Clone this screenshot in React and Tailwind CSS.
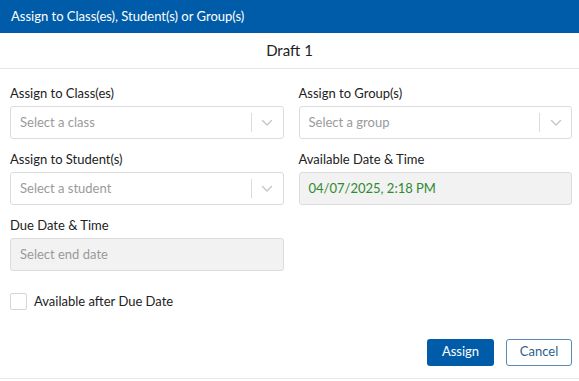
import React from "react";

function Chevron() {
  return (
    <svg width="12" height="8" viewBox="0 0 12 8" fill="none">
      <path d="M1.5 1.5 L6 6 L10.5 1.5" stroke="#c4c4c4" strokeWidth="1.3" strokeLinecap="round" strokeLinejoin="round" />
    </svg>
  );
}

function SelectBox({ placeholder }) {
  return (
    <div className="flex h-[33px] items-center rounded-[3px] border border-[#dcdcdc] bg-white">
      <div className="flex-1 pl-[9px] text-[13px] text-[#9a9a9a]">{placeholder}</div>
      <div className="h-[19px] w-px bg-[#dcdcdc]" />
      <div className="flex w-[31px] items-center justify-center">
        <Chevron />
      </div>
    </div>
  );
}

function Field({ label, children, className = "" }) {
  return (
    <div className={className}>
      <div className="mb-[4px] h-[18px] text-[13px] leading-[18px] text-[#222]">{label}</div>
      {children}
    </div>
  );
}

export default function App() {
  return (
    <div
      className="h-[381px] w-[579px] overflow-hidden bg-white"
      style={{ fontFamily: "Lato, 'Noto Sans', sans-serif" }}
    >
      <div className="flex h-[33px] items-center bg-[#005ca9] pl-[11px] text-[13px] text-white">
        Assign to Class(es), Student(s) or Group(s)
      </div>
      <div className="flex h-[36px] items-center justify-center border-b border-[#e6e6e6] text-[15px] text-[#222]">
        Draft 1
      </div>
      <div className="pl-[10px] pr-[7px] pt-[15px]">
        <div className="grid grid-cols-2 gap-x-[15px] gap-y-[11px]">
          <Field label="Assign to Class(es)">
            <SelectBox placeholder="Select a class" />
          </Field>
          <Field label="Assign to Group(s)">
            <SelectBox placeholder="Select a group" />
          </Field>
          <Field label="Assign to Student(s)">
            <SelectBox placeholder="Select a student" />
          </Field>
          <Field label="Available Date & Time">
            <div className="flex h-[33px] items-center rounded-[3px] border border-[#dcdcdc] bg-[#f2f2f2] pl-[9px] text-[13px] text-[#2f8a2f]">
              04/07/2025, 2:18 PM
            </div>
          </Field>
          <Field label="Due Date & Time">
            <div className="flex h-[33px] items-center rounded-[3px] border border-[#dcdcdc] bg-[#f2f2f2] pl-[9px] text-[13px] text-[#9a9a9a]">
              Select end date
            </div>
          </Field>
        </div>
        <div className="mt-[21px] flex items-center gap-[7px]">
          <div className="h-[17px] w-[17px] rounded-[2px] border border-[#d6d6d6] bg-white" />
          <span className="text-[13px] text-[#222]">Available after Due Date</span>
        </div>
        <div className="mt-[27px] flex justify-end gap-[12px]">
          <button className="h-[27px] w-[67px] rounded-[3px] bg-[#005ca9] text-[13px] text-white">Assign</button>
          <button className="h-[27px] w-[66px] rounded-[3px] border border-[#5b88b5] bg-white text-[13px] text-[#2d5f8f]">Cancel</button>
        </div>
      </div>
      <div className="mt-[12px] h-px bg-[#e8e8e8]" />
    </div>
  );
}
